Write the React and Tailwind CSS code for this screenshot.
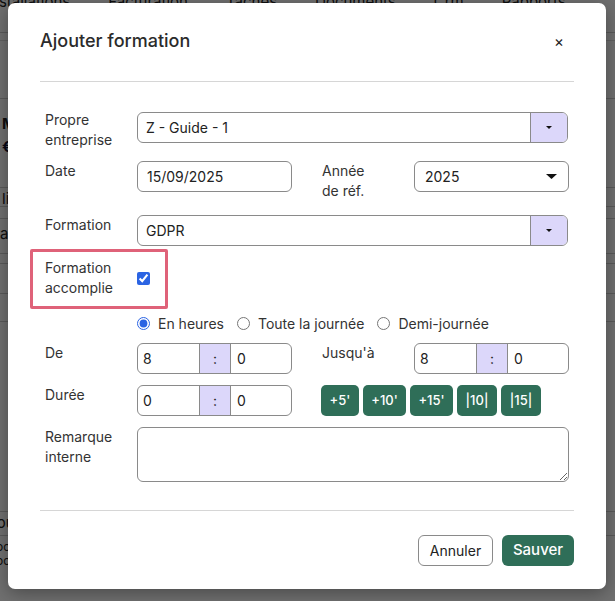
import { useState } from 'react'

const GREEN = 'bg-[#2f6e58]'

function Caret({ w = 7, h = 4 }) {
  return (
    <svg width={w} height={h} viewBox={`0 0 ${w} ${h}`}>
      <polygon points={`0,0 ${w},0 ${w / 2},${h}`} fill="#111" />
    </svg>
  )
}

function ComboBox({ value }) {
  return (
    <div className="mt-[2px] flex h-[31px] w-[431px] overflow-hidden rounded-[6px] border border-[#8a8a8a]">
      <div className="flex flex-1 items-center pl-[8px] text-[14px] text-[#222]">{value}</div>
      <div className="flex w-[37px] items-center justify-center border-l border-[#8a8a8a] bg-[#dcd7fa]">
        <Caret w={6} h={3} />
      </div>
    </div>
  )
}

function TimeInput({ h, m }) {
  return (
    <div className="flex h-[31px] w-[155px] overflow-hidden rounded-[6px] border border-[#8a8a8a] text-[14px] text-[#222]">
      <div className="flex w-[61px] items-center pl-[5px]">{h}</div>
      <div className="flex w-[32px] items-center justify-center border-x border-[#8a8a8a] bg-[#dcd7fa]">:</div>
      <div className="flex flex-1 items-center pl-[6px]">{m}</div>
    </div>
  )
}

function Label({ children, className = '' }) {
  return (
    <div className={`w-[92px] shrink-0 text-[14px] leading-[20px] text-[#333] ${className}`}>
      {children}
    </div>
  )
}

const quick = [
  ["+5'", 'w-[38px]'],
  ["+10'", 'w-[43px]'],
  ["+15'", 'w-[43px]'],
  ['|10|', 'w-[40px]'],
  ['|15|', 'w-[40px]'],
]

export default function App() {
  const [mode, setMode] = useState('heures')
  const [done, setDone] = useState(true)

  return (
    <div className="relative h-[601px] w-[615px] overflow-hidden bg-white font-['Inter',sans-serif]">
      {/* page behind the dialog */}
      <div className="text-[15px] text-[#222]">
        <div className="-mt-[9px] flex h-[42px] gap-[38px] border-b border-[#ccc] whitespace-nowrap">
          <span className="-ml-[14px]">Installations</span>
          <span>Facturation</span>
          <span>Tâches</span>
          <span>Documents</span>
          <span>Crm</span>
          <span>Rapports</span>
        </div>
        <div className="h-[8px] border-b border-[#ddd]" />
        <div className="h-[58px] border-b border-[#ccc]" />
        <div className="h-[88px] pl-[2px] pt-[14px] font-bold">M<br /><span className="text-[#113]">€</span></div>
        <div className="h-[20px] border-y border-[#ccc] pl-[2px]">li</div>
        <div className="h-[12px] border-b border-[#ccc]" />
        <div className="h-[35px] border-b border-[#ccc] pt-[4px]">ai</div>
        <div className="h-[10px] border-b border-[#ccc]" />
        <div className="h-[30px] border-b border-[#ccc]" />
        <div className="h-[28px] border-b border-[#ccc]" />
        <div className="h-[190px] border-b border-[#ccc]" />
        <div className="-ml-[8px]">tou</div>
        <div className="-ml-[8px] border-t border-[#ccc] pt-[4px] text-[12px] leading-[14px]">foo<br />foo</div>
      </div>
      <div className="absolute inset-0 bg-black/[0.56]" />

      {/* dialog */}
      <div className="absolute left-[8px] top-[3px] w-[598px] rounded-[7px] bg-white px-[32px] shadow-[0_4px_18px_rgba(0,0,0,0.35)]">
        <div className="flex h-[79px] items-start justify-between border-b border-[#d6d6d6] pt-[26px]">
          <h2 className="text-[18px] font-medium leading-[24px] text-[#2b2b2b]">
            Ajouter formation
          </h2>
          <button className="mr-[10px] mt-[3px] text-[15px] leading-[20px] text-[#222]">×</button>
        </div>

        <div className="border-b border-[#d6d6d6] px-[5px] pb-[28px] pt-[28px]">
          <div className="flex items-start">
            <Label>Propre<br />entreprise</Label>
            <ComboBox value="Z - Guide - 1" />
          </div>

          <div className="mt-[11px] flex items-start">
            <Label>Date</Label>
            <div className="flex h-[31px] w-[155px] items-center rounded-[6px] border border-[#8a8a8a] pl-[9px] text-[14px] text-[#222]">
              15/09/2025
            </div>
            <Label className="ml-[30px]">Année<br />de réf.</Label>
            <div className="flex h-[31px] w-[155px] items-center justify-between rounded-[6px] border border-[#8a8a8a] pl-[10px] pr-[11px] text-[14px] text-[#222]">
              2025
              <Caret w={11} h={5} />
            </div>
          </div>

          <div className="mt-[14px] flex items-start">
            <Label>Formation</Label>
            <div className="-mt-[2px]">
              <ComboBox value="GDPR" />
            </div>
          </div>

          <div className="-ml-[15px] mt-[3px] h-[60px] w-[138px] rounded-[2px] border-[3px] border-[#df6279] pl-[12px] pt-[6px]">
            <div className="flex items-center">
              <Label>Formation<br />accomplie</Label>
              <input
                type="checkbox"
                checked={done}
                onChange={e => setDone(e.target.checked)}
                className="m-0 h-[13px] w-[13px] accent-[#2b64e3]"
              />
            </div>
          </div>

          <div className="mt-[4px] flex h-[20px] items-center pl-[92px] text-[14px] text-[#333]">
            {[
              ['heures', 'En heures'],
              ['journee', 'Toute la journée'],
              ['demi', 'Demi-journée'],
            ].map(([key, text]) => (
              <label key={key} className="mr-[13px] flex items-center gap-[8px]">
                <input
                  type="radio"
                  name="mode"
                  checked={mode === key}
                  onChange={() => setMode(key)}
                  className="m-0 h-[13px] w-[13px] accent-[#2b64e3]"
                />
                {text}
              </label>
            ))}
          </div>

          <div className="mt-[10px] flex items-start">
            <Label>De</Label>
            <TimeInput h="8" m="0" />
            <Label className="ml-[30px]">Jusqu'à</Label>
            <TimeInput h="8" m="0" />
          </div>

          <div className="mt-[11px] flex items-start">
            <Label>Durée</Label>
            <TimeInput h="0" m="0" />
            <div className="ml-[29px] flex gap-[4px]">
              {quick.map(([t, w]) => (
                <button
                  key={t}
                  className={`h-[31px] ${w} rounded-[5px] ${GREEN} text-[13px] font-medium text-white`}
                >
                  {t}
                </button>
              ))}
            </div>
          </div>

          <div className="mt-[11px] flex items-start">
            <Label>Remarque<br />interne</Label>
            <textarea className="h-[55px] w-[432px] rounded-[6px] border border-[#8a8a8a] px-[8px] py-[5px] text-[14px] outline-none" />
          </div>
        </div>

        <div className="flex justify-end gap-[9px] pb-[23px] pt-[24px]">
          <button className="h-[31px] w-[75px] rounded-[6px] border border-[#8a8a8a] text-[14px] text-[#222]">
            Annuler
          </button>
          <button className={`h-[31px] w-[72px] rounded-[6px] ${GREEN} text-[15px] font-medium text-white`}>
            Sauver
          </button>
        </div>
      </div>
    </div>
  )
}
